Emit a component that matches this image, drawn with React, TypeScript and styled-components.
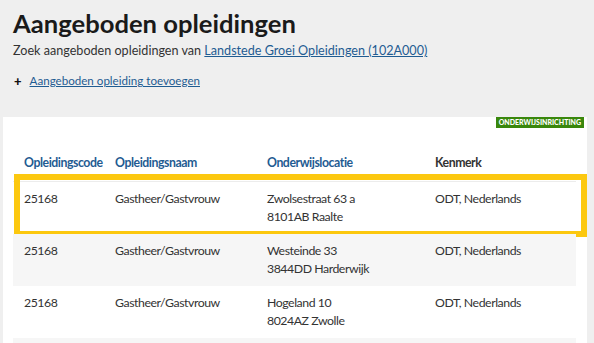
import styled, { createGlobalStyle } from 'styled-components';

const GlobalStyle = createGlobalStyle`
  body {
    margin: 0;
    background: #efefef;
    font-family: Lato, "Open Sans", sans-serif;
    color: #333;
  }
`;

const Page = styled.main`
  padding: 0 7px 0 3px;
`;

const Header = styled.header`
  padding: 6px 10px 0 10px;
`;

const Title = styled.h1`
  margin: 0;
  font-size: 25.6px;
  line-height: 34px;
  font-weight: 700;
  color: #1a1a1a;
`;

const Intro = styled.p`
  margin: 2px 0 0;
  font-size: 12.6px;
  line-height: 18px;
`;

const Link = styled.a`
  color: #1f5c92;
  text-decoration: underline;
`;

const AddLink = styled.div`
  display: flex;
  align-items: center;
  gap: 8px;
  margin: 13px 0 0 1px;
  font-size: 11.6px;
  line-height: 16px;
`;

const Plus = styled.span`
  font-weight: 900;
  font-size: 13px;
  color: #111;
`;

const Panel = styled.section`
  margin-top: 28px;
  background: #fff;
  min-height: 240px;
`;

const BadgeRow = styled.div`
  display: flex;
  justify-content: flex-end;
  padding-right: 3px;
`;

const Badge = styled.span`
  background: #39870c;
  color: #fff;
  font-size: 7px;
  font-weight: 900;
  line-height: 11px;
  padding: 0 3px;
`;

const Table = styled.div`
  margin: 23px 11px 0 10px;
  font-size: 12.3px;
  letter-spacing: -0.45px;
`;

const Row = styled.div<{ $striped?: boolean; $marked?: boolean }>`
  position: relative;
  display: grid;
  grid-template-columns: 91px 152px 168px 1fr;
  background: ${p => (p.$striped ? '#f6f6f6' : '#fff')};

  ${p =>
    p.$marked &&
    `
    &::after {
      content: '';
      position: absolute;
      left: 1px;
      right: -11px;
      top: -8px;
      bottom: -3px;
      border: 6px solid #fcc80f;
      pointer-events: none;
    }
  `}
`;

const HeadRow = styled(Row)`
  border-bottom: 1px solid #ececec;
`;

const Th = styled.div<{ $sortable?: boolean }>`
  padding: 3px 11px 9px;
  line-height: 18px;
  font-weight: 700;
  color: ${p => (p.$sortable ? '#1f5c92' : '#333')};
`;

const Td = styled.div`
  padding: 8px 11px;
  line-height: 18px;
`;

const rows = [
  { code: '25168', naam: 'Gastheer/Gastvrouw', straat: 'Zwolsestraat 63 a', plaats: '8101AB Raalte' },
  { code: '25168', naam: 'Gastheer/Gastvrouw', straat: 'Westeinde 33', plaats: '3844DD Harderwijk' },
  { code: '25168', naam: 'Gastheer/Gastvrouw', straat: 'Hogeland 10', plaats: '8024AZ Zwolle' },
];

export default function App() {
  return (
    <>
      <GlobalStyle />
      <Page>
        <Header>
          <Title>Aangeboden opleidingen</Title>
          <Intro>
            Zoek aangeboden opleidingen van <Link href="#">Landstede Groei Opleidingen (102A000)</Link>
          </Intro>
          <AddLink>
            <Plus>+</Plus>
            <Link href="#">Aangeboden opleiding toevoegen</Link>
          </AddLink>
        </Header>
        <Panel>
          <BadgeRow>
            <Badge>ONDERWIJSINRICHTING</Badge>
          </BadgeRow>
          <Table>
            <HeadRow>
              <Th $sortable>Opleidingscode</Th>
              <Th $sortable>Opleidingsnaam</Th>
              <Th $sortable>Onderwijslocatie</Th>
              <Th>Kenmerk</Th>
            </HeadRow>
            {rows.map((r, i) => (
              <Row key={i} $striped={i % 2 === 1} $marked={i === 0}>
                <Td>{r.code}</Td>
                <Td>{r.naam}</Td>
                <Td>
                  {r.straat}
                  <br />
                  {r.plaats}
                </Td>
                <Td>ODT, Nederlands</Td>
              </Row>
            ))}
            <Row $striped>
              <Td>&nbsp;</Td>
            </Row>
          </Table>
        </Panel>
      </Page>
    </>
  );
}
